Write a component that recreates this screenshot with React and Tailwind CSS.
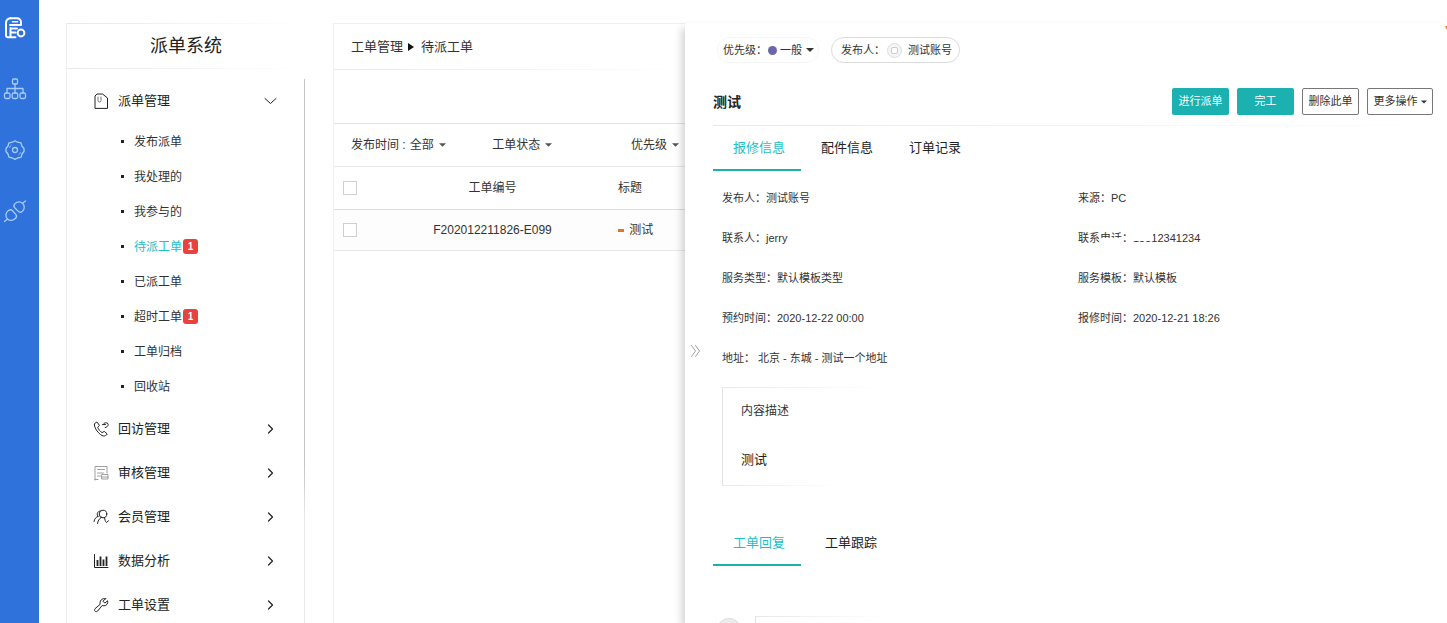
import { useState } from "react";

const SUB_ITEMS = [
  { label: "发布派单" },
  { label: "我处理的" },
  { label: "我参与的" },
  { label: "待派工单", count: 1, active: true },
  { label: "已派工单" },
  { label: "超时工单", count: 1 },
  { label: "工单归档" },
  { label: "回收站" },
];

const DETAILS = [
  ["发布人：", "测试账号"],
  ["来源：", "PC"],
  ["联系人：", "jerry"],
  ["联系电话：", "18812341234"],
  ["服务类型：", "默认模板类型"],
  ["服务模板：", "默认模板"],
  ["预约时间：", "2020-12-22 00:00"],
  ["报修时间：", "2020-12-21 18:26"],
];

function Icon({ children, className = "size-4", box = 16, width = 1 }) {
  return (
    <svg
      viewBox={`0 0 ${box} ${box}`}
      className={`shrink-0 ${className}`}
      fill="none"
      stroke="currentColor"
      strokeWidth={width}
      strokeLinecap="round"
      strokeLinejoin="round"
      aria-hidden="true"
    >
      {children}
    </svg>
  );
}

const ICONS = {
  dispatch: (
    <Icon>
      <path d="M2 15V3L4 1H9.500L14.500 5V15Z" />
      <path d="M5 4v3.500a1.500 1.500 0 0 0 3 0V4" strokeWidth="0.6" />
    </Icon>
  ),
  visit: (
    <Icon>
      <path d="M3.600 1.200 1.600 2.600C.2 6 6.500 14.600 10.600 15c1.300.1 2.800-.7 3.700-2l-3-2.600-2.200 1.200C7 10.500 5.400 8.200 4.700 6.200l1.500-1.500Z" />
      <path d="M9.500 3.600h3M11 2.200c2.300-.9 4.200-.3 4.200 1.400 0 1.400-1.400 2.600-3 3" />
    </Icon>
  ),
  review: (
    <Icon className="size-4 text-[#888]" width={0.8}>
      <path d="M2 15V1.500h12V8M2 14.500h3M4.500 4.500h7M4.500 8h6M4.500 11h3M9 9.500h6v4.500H9zM9 12h6" />
    </Icon>
  ),
  member: (
    <Icon>
      <path d="M5 7.500C3.500 5.500 4 2.500 7 2M1 12.500c.5-2.800 2-4.500 4-5" />
      <circle cx="10" cy="5" r="3.800" />
      <path d="M4.500 14.500c.3-2.500 1.700-4.800 3.700-6.200M11.500 8.800c.5 1.700.8 4 2 4.700l2-1.700" />
    </Icon>
  ),
  data: (
    <Icon>
      <path d="M1.500 1.500v13h13.500" />
      <path d="M4.500 7v6M7.500 3.500V13M10.500 6.500V13M13.500 3.500V13" strokeWidth="1.800" strokeLinecap="butt" />
    </Icon>
  ),
  setting: (
    <Icon>
      <path d="M12.500 1.700 10 4.200l1.800 1.900 2.800-2.300c.7 2.300-.8 5-3.600 5-.8 0-1.200-.1-1.800-.3l-4.700 5.700c-1.600 1.500-4-.8-2.500-2.500l5.200-4.400C6.200 4.300 8.900.6 12.500 1.700Z" />
    </Icon>
  ),
};

const MENU = [
  { icon: "visit", label: "回访管理" },
  { icon: "review", label: "审核管理" },
  { icon: "member", label: "会员管理" },
  { icon: "data", label: "数据分析" },
  { icon: "setting", label: "工单设置" },
];

function Caret({ className = "w-2" }) {
  return (
    <svg viewBox="0 0 8 4" className={`h-1 shrink-0 ${className}`} fill="currentColor" aria-hidden="true">
      <path d="M0 0H8L4 4Z" />
    </svg>
  );
}

// Hairline that fades out to the right
function FadeLine({ className = "" }) {
  return <div className={`h-px bg-linear-to-r from-[#e8e8e8] to-transparent ${className}`} />;
}

function Rail() {
  return (
    <nav className="w-[39px] shrink-0 bg-[#2f72dc] text-[#a9ccfa] flex flex-col items-center pr-[9px] pt-4 gap-[37px]">
      <a href="#orders" aria-label="工单" className="text-white">
        <Icon className="size-6" box={24} width={2}>
          <path d="M7.500 2.200h6.500a4 4 0 0 1 4 4V9H7" />
          <path d="M9.500 5.800h5" strokeWidth="1.600" />
          <path d="M7.500 2.200A5 5 0 0 0 3 7v12.200a2 2 0 0 0 2 2h7.500M7.500 12v8M7.500 12.500H14M7.500 16.500h5" />
          <circle cx="18" cy="17" r="3.400" />
        </Icon>
      </a>
      <a href="#org" aria-label="组织">
        <Icon className="size-6" box={24} width={1.3}>
          <rect x="9.500" y="2" width="5" height="5" rx="1" />
          <path d="M12 7v9M4 16v-4.500h16V16" />
          <rect x="1.500" y="16" width="5.500" height="5.500" rx="1.500" />
          <rect x="9.200" y="16" width="5.500" height="5.500" rx="1.500" />
          <rect x="17" y="16" width="5.500" height="5.500" rx="1.500" />
        </Icon>
      </a>
      <a href="#config" aria-label="配置">
        <Icon className="size-6" box={24} width={1.3}>
          <path d="M9.500 4.200 12 2.800l2.500 1.400 3.500.6.800 3.200 2.200 2.500v3l-2 2.500-.8 3.200-3.700.8L12 21.400 9.500 20 6 19.200 5 16l-2-2.500v-3L5 8l1-3.200Z" />
          <circle cx="12" cy="12" r="2.500" />
          <path d="M6.500 9.500c.4-1 1-1.700 1.800-2.300M17.500 14.500c-.4 1-1 1.700-1.800 2.300" strokeWidth="0.800" />
        </Icon>
      </a>
      <a href="#link" aria-label="连接">
        <Icon className="size-6" box={24} width={1.300}>
          <path d="M1.500 22.500 4.500 20M4.500 20C2 17.500 2.500 13.500 5.500 11.500c1.500-1 3-.8 4 .3l3.300 3.600c1 1.200.9 2.700-.2 3.900-2.300 2.500-5.800 2.900-8.100.7ZM22.500 2l-3 2.300M19.500 4.300c2.500 2.300 2.200 6-.3 8.100-1.400 1.200-2.800 1.100-3.900 0l-3.600-3.700c-1-1.100-1-2.600.1-3.800 2.200-2.400 5.300-2.800 7.700-.6Z" />
        </Icon>
      </a>
    </nav>
  );
}

function Sidebar() {
  const [open, setOpen] = useState(true);
  return (
    <aside className="w-[239px] shrink-0 ml-[27px] mt-[23px] border-l border-[#ececec]">
      <FadeLine />
      <h1 className="h-11 flex items-center justify-center text-lg text-[#222]">派单系统</h1>
      <FadeLine />
      <div className="flex mt-[10px]">
        <div className="flex-1 px-[26px]">
          <button onClick={() => setOpen(!open)} className="w-full h-11 flex items-center text-[13px]">
            {ICONS.dispatch}
            <span className="ml-[9px] flex-1 text-left">派单管理</span>
            <Icon className="size-4">
              <path d="M3 5.500l5.500 5L14 5.500" />
            </Icon>
          </button>
          {open && (
            <ul className="pt-px pb-[3px]">
              {SUB_ITEMS.map((s) => (
                <li key={s.label} className="h-[35px] flex items-center pl-7 text-xs">
                  <span className="size-[3px] bg-[#222]" />
                  <a href="#list" className={`ml-[10px] ${s.active ? "text-[#1cc0c8]" : "text-[#333]"}`}>
                    {s.label}
                  </a>
                  {s.count && (
                    <span className="ml-px size-[15px] rounded-[3px] bg-[#e8413e] text-white text-[10px] leading-[15px] font-bold text-center">
                      {s.count}
                    </span>
                  )}
                </li>
              ))}
            </ul>
          )}
          {MENU.map((m) => (
            <button key={m.label} className="w-full h-11 flex items-center text-[13px]">
              {ICONS[m.icon]}
              <span className="ml-[9px] flex-1 text-left">{m.label}</span>
              <Icon className="size-4" width={1.200}>
                <path d="M6.500 4l4 4L6.500 12" />
              </Icon>
            </button>
          ))}
        </div>
        <div className="w-px bg-linear-to-b from-[#c4c4c4] from-70% to-[#e8e8e8] to-80%" />
      </div>
    </aside>
  );
}

function Filter({ id, label, value }) {
  return (
    <div className="flex items-center gap-1 text-[#333]">
      {label && <label htmlFor={id}>{label}</label>}
      <select id={id} aria-label={label ? undefined : value} className="appearance-none bg-transparent">
        <option>{value}</option>
      </select>
      <Caret className="w-[7px] text-[#555]" />
    </div>
  );
}

function Checkbox({ label }) {
  return (
    <input
      type="checkbox"
      aria-label={label}
      className="block appearance-none size-[14px] border border-[#d0d0d0] bg-white"
    />
  );
}

function OrderList() {
  return (
    <section className="w-[352px] shrink-0 ml-7 mt-[23px] border-l border-[#f2f2f2]">
      <div className="h-px bg-[#f0f0f0]" />
      <div className="h-[45px] flex items-center pl-[17px] gap-[5px] text-[13px] text-[#333]">
        <a href="#manage">工单管理</a>
        <svg viewBox="0 0 6 8" className="w-[6px] h-2" fill="#111" aria-hidden="true">
          <path d="M0 0L6 4L0 8Z" />
        </svg>
        <span className="ml-[2px]">待派工单</span>
      </div>
      <FadeLine />
      <div className="mt-[53px] h-[43px] border-t border-[#e2e2e2] flex items-center justify-between pl-[17px] pr-[6px] text-xs">
        <Filter id="time" label="发布时间 :" value="全部" />
        <Filter id="state" value="工单状态" />
        <div className="pl-8">
          <Filter id="level" value="优先级" />
        </div>
      </div>
      <table className="w-full text-xs text-[#333] border-t border-[#e8e8e8]">
        <thead>
          <tr className="h-[43px] border-b border-[#dedede]">
            <th className="w-[50px] pl-[9px]">
              <Checkbox label="全选" />
            </th>
            <th className="font-normal text-center">工单编号</th>
            <th className="w-[84px] pl-[17px] font-normal text-left">标题</th>
          </tr>
        </thead>
        <tbody>
          <tr className="h-[41px] border-b border-[#e8e8e8] bg-[#fdfdfd]">
            <td className="pl-[9px]">
              <Checkbox label="选择工单" />
            </td>
            <td className="text-center">F202012211826-E099</td>
            <td className="pl-[17px]">
              <span className="inline-block align-middle w-[6px] h-[3px] bg-[#e0761f] mr-[2px]" /> 测试
            </td>
          </tr>
        </tbody>
      </table>
    </section>
  );
}

function Tabs({ items, className = "" }) {
  const [active, setActive] = useState(0);
  return (
    <div role="tablist" className={`flex text-[13px] ${className}`}>
      {items.map((t, i) => (
        <button
          key={t}
          role="tab"
          aria-selected={i === active}
          onClick={() => setActive(i)}
          className={`h-[45px] pl-5 pr-4 border-b-2 ${
            i === active ? "border-[#1bb3a9] text-[#1cc0c8]" : "border-transparent text-[#222]"
          }`}
        >
          {t}
        </button>
      ))}
    </div>
  );
}

function Field({ label, value }) {
  const masked = label === "联系电话：";
  return (
    <div className="h-10 flex items-center">
      <dt className="relative">
        {label}
        {masked && <span className="absolute left-[22px] top-2 w-[22px] h-2 bg-white" />}
      </dt>
      <dd className="relative">
        {value}
        {masked && <span className="absolute left-0 top-0 w-5 h-[11px] bg-white" />}
      </dd>
    </div>
  );
}

function Drawer() {
  return (
    <main className="flex-1 min-w-0 mt-[23px] flex bg-white shadow-[-3px_5px_8px_rgba(0,0,0,0.18)]">
      <button aria-label="收起" className="w-7 shrink-0 self-start mt-[320px] pl-[3px] text-[#999]">
        <Icon className="size-4" width={0.900}>
          <path d="M3.500 2.500L7.500 8L3.500 13.500M7.500 2.500L11.500 8L7.500 13.500" />
        </Icon>
      </button>
      <div className="flex-1 min-w-0 pt-[14px] text-[11px] text-[#333]">
        <div className="relative flex gap-3">
          <div className="h-[26px] ml-1 w-[102px] rounded-full border border-[#f6f6f6] flex items-center pl-[5px]">
            <label htmlFor="priority">优先级：</label>
            <span className="size-[9px] rounded-full bg-[#6a66ab] ml-px mr-[3px]" />
            <select id="priority" className="appearance-none bg-transparent mr-1">
              <option>一般</option>
            </select>
            <Caret />
          </div>
          <div className="h-[26px] rounded-full border border-[#dcdcdc] flex items-center pl-[9px] pr-[7px]">
            发布人：
            <span className="size-[15px] rounded-full border border-[#ddd] bg-[#f5f5f5] flex items-center justify-center ml-[2px] mr-[6px]">
              <span className="size-[7px] rounded-[2px] border border-[#ccc] bg-white" />
            </span>
            测试账号
          </div>
          <svg viewBox="0 0 2 4" className="absolute right-0 -top-[11px] w-[2px] h-1" fill="#f0841f" aria-hidden="true">
            <path d="M0 0H2V4Z" />
          </svg>
        </div>

        <div className="mt-[25px] flex items-center pr-[14px] pb-[10px]">
          <h2 className="flex-1 text-sm font-bold text-[#222]">测试</h2>
          <div className="flex gap-2">
            <button className="h-[27px] w-[57px] rounded-[2px] bg-[#1bb1b1] text-white">进行派单</button>
            <button className="h-[27px] w-[57px] rounded-[2px] bg-[#1bb1b1] text-white">完工</button>
            <button className="h-[27px] w-[57px] rounded-[2px] border border-[#777]">删除此单</button>
            <button className="h-[27px] w-[66px] rounded-[2px] border border-[#777] flex items-center justify-center gap-[3px]">
              更多操作
              <Caret className="w-[6px]" />
            </button>
          </div>
        </div>
        <FadeLine />
        <Tabs items={["报修信息", "配件信息", "订单记录"]} />

        <dl className="mt-[7px] pl-[9px] pr-[13px] grid grid-cols-2">
          {DETAILS.map(([label, value]) => (
            <Field key={label} label={label} value={value} />
          ))}
          <Field label="地址：" value={<span className="ml-[3px]">北京 - 东城 - 测试一个地址</span>} />
        </dl>

        <section className="mt-[9px] ml-[9px] border-l border-[#e4e4e4]">
          <FadeLine className="w-40" />
          <div className="pl-[18px]">
            <h3 className="h-[46px] flex items-center text-xs">内容描述</h3>
            <p className="h-[51px] flex items-center text-[13px] text-[#222]">测试</p>
          </div>
          <FadeLine className="w-28" />
        </section>

        <Tabs items={["工单回复", "工单跟踪"]} className="mt-[35px] gap-1" />

        <div className="mt-[50px] flex gap-[13px] pl-[3px]">
          <span className="mt-[2px] size-[26px] shrink-0 rounded-full bg-[#ececec] border border-[#ddd]" />
          <div className="flex-1 border-l border-[#e2e2e2]">
            <FadeLine className="w-[132px]" />
            <textarea aria-label="回复" rows={3} className="block w-full resize-none px-2 outline-none" />
          </div>
        </div>
      </div>
    </main>
  );
}

export default function App() {
  return (
    <div className="h-screen flex overflow-hidden bg-white text-[#222] font-['Liberation_Sans','Noto_Sans_CJK_SC',sans-serif]">
      <Rail />
      <Sidebar />
      <OrderList />
      <Drawer />
    </div>
  );
}
